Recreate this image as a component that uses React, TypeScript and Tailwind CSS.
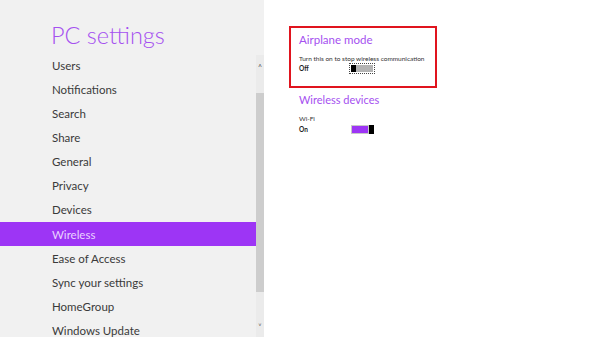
import React from "react";

const items = [
  "Users",
  "Notifications",
  "Search",
  "Share",
  "General",
  "Privacy",
  "Devices",
  "Wireless",
  "Ease of Access",
  "Sync your settings",
  "HomeGroup",
  "Windows Update",
];

export default function App() {
  return (
    <div
      className="flex w-[600px] h-[337px] overflow-hidden bg-white"
      style={{ fontFamily: 'Lato, "Noto Sans", sans-serif' }}
    >
      <div className="flex w-[264px] h-full bg-[#f1f1f1] overflow-hidden">
        <div className="flex flex-col w-[256px]">
          <div className="shrink-0 pl-[51px] pt-[20px] h-[53.5px] text-[23.5px] leading-[30px] text-[#a550f0] font-light">
            PC settings
          </div>
          <div className="flex flex-col shrink-0">
            {items.map((it) => (
              <div
                key={it}
                className={
                  it === "Wireless"
                    ? "shrink-0 h-[24.1px] pl-[52px] flex items-center text-[11.5px] text-[#e9d2ff] bg-[#9d35f5]"
                    : "shrink-0 h-[24.1px] pl-[52px] flex items-center text-[11.5px] text-[#3a3a3a]"
                }
              >
                {it}
              </div>
            ))}
          </div>
        </div>
        <div className="flex flex-col w-[8px] h-full bg-[#f1f1f1]">
          <div className="h-[55px]" />
          <div className="flex-1 flex flex-col bg-[#ebebeb]">
            <div className="h-[38px] pt-[9px] flex justify-center text-[7px] text-[#555] leading-none">
              ^
            </div>
            <div className="h-[199px] bg-[#cdcdcd]" />
            <div className="flex-1 flex items-end justify-center text-[7px] text-[#555] leading-none pb-[7px]">
              ˅
            </div>
          </div>
        </div>
      </div>
      <div className="flex flex-col pl-[25px] pt-[26px]">
        <div className="w-[148px] h-[62px] border-2 border-[#e0141e] pl-[8px] pt-[3px]">
          <div className="text-[11.5px] leading-[17px] text-[#a550f0]">Airplane mode</div>
          <div className="mt-[7px] text-[6.5px] leading-[8px] text-[#333]">
            Turn this on to stop wireless communication
          </div>
          <div className="flex items-center mt-[0px]">
            <div className="w-[50px] text-[6.5px] font-bold text-[#222]">Off</div>
            <div className="w-[26px] h-[11px] border border-dotted border-[#444] p-[1px] flex">
              <div className="w-[5px] h-full bg-black" />
              <div className="flex-1 h-full bg-[#b3b3b3]" />
            </div>
          </div>
        </div>
        <div className="pl-[10px] pt-[3px]">
          <div className="text-[11px] leading-[17px] text-[#a550f0]">Wireless devices</div>
          <div className="mt-[7px] text-[6.5px] leading-[8px] text-[#333]">Wi-Fi</div>
          <div className="flex items-center mt-[2px]">
            <div className="w-[52px] text-[6.5px] font-bold text-[#222]">On</div>
            <div className="w-[23px] h-[9px] flex">
              <div className="flex-1 h-full bg-[#9d35f5] border border-[#c8c8c8]" />
              <div className="w-[5px] h-full bg-black" />
            </div>
          </div>
        </div>
      </div>
    </div>
  );
}
